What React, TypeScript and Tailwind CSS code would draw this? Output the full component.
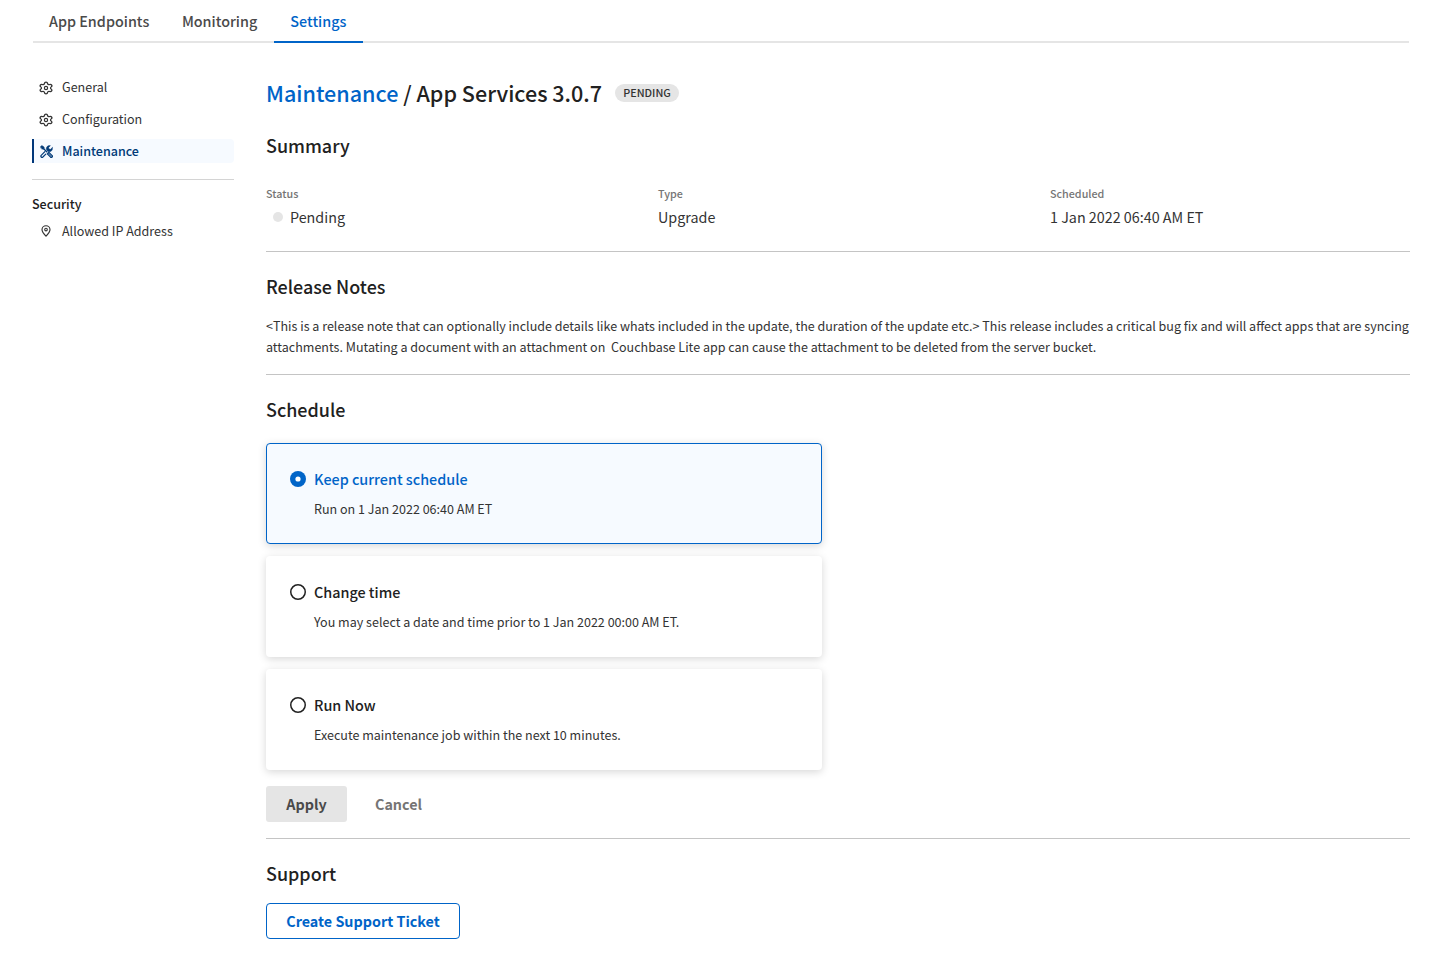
import type { ReactNode } from "react";

const tabs = [
  { label: "App Endpoints", active: false },
  { label: "Monitoring", active: false },
  { label: "Settings", active: true },
];

const options = [
  { title: "Keep current schedule", text: "Run on 1 Jan 2022 06:40 AM ET", selected: true },
  { title: "Change time", text: "You may select a date and time prior to 1 Jan 2022 00:00 AM ET.", selected: false },
  { title: "Run Now", text: "Execute maintenance job within the next 10 minutes.", selected: false },
];

const releaseNotes =
  "<This is a release note that can optionally include details like whats included in the update, the duration of the update etc.> This release includes a critical bug fix and will affect apps that are syncing\nattachments. Mutating a document with an attachment on  Couchbase Lite app can cause the attachment to be deleted from the server bucket.";

function GearIcon() {
  return (
    <svg className="mt-px size-[14px]" viewBox="0 0 24 24" fill="none" stroke="currentColor" strokeWidth="2" strokeLinejoin="round">
      <path d="M9.671 4.136a2.34 2.34 0 0 1 4.659 0 2.34 2.34 0 0 0 3.319 1.915 2.34 2.34 0 0 1 2.33 4.033 2.34 2.34 0 0 0 0 3.831 2.34 2.34 0 0 1-2.33 4.033 2.34 2.34 0 0 0-3.319 1.915 2.34 2.34 0 0 1-4.659 0 2.34 2.34 0 0 0-3.32-1.915 2.34 2.34 0 0 1-2.33-4.033 2.34 2.34 0 0 0 0-3.831A2.34 2.34 0 0 1 6.35 6.051a2.34 2.34 0 0 0 3.319-1.915" transform="translate(12 12) scale(1.12 1) translate(-12 -12)" />
      <circle cx="12" cy="12" r="2.8" />
    </svg>
  );
}

function ToolsIcon() {
  return (
    <svg className="mt-px size-[13px]" viewBox="0 0 24 24" fill="none" stroke="currentColor" strokeLinecap="round" strokeLinejoin="round">
      <path d="M1 3.2 3.2 1 7.6 3.8v2.6L6.4 7.6H3.8Z" fill="currentColor" strokeWidth="1" />
      <path d="m6.8 6.8 6 6" strokeWidth="2.4" />
      <path d="m13.6 16.4 2.8-2.8 6 6a2 2 0 0 1-2.8 2.8Z" strokeWidth="2.4" />
      <path d="m15.6 15.6 5 5" strokeWidth="1.2" />
      <path
        d="M22.8 4.8 19.6 8l-3-.6-.6-3 3.2-3.2a6 6 0 0 0-7.4 7.6l1.6 2 2 1.6a6 6 0 0 0 7.4-7.6Z"
        fill="currentColor"
        strokeWidth="0.8"
      />
      <path d="m9 12.2-6.8 6.9a2.2 2.2 0 0 0 3.1 3.1l5.4-5.4" strokeWidth="2.2" />
    </svg>
  );
}

function PinIcon() {
  return (
    <svg className="h-3 w-[10px]" viewBox="0 0 10 12" fill="none" stroke="currentColor">
      <path d="M5 11.2C3.9 10 1 6.9 1 4.7a4 4 0 0 1 8 0C9 6.9 6.1 10 5 11.2Z" strokeWidth="1.15" strokeLinejoin="round" />
      <circle cx="5" cy="4.6" r="1.3" strokeWidth="1.1" />
    </svg>
  );
}

function Radio({ selected }: { selected: boolean }) {
  return selected ? (
    <svg className="mt-1 size-4" viewBox="0 0 16 16">
      <circle cx="8" cy="8" r="8" fill="#0064c8" />
      <circle cx="8" cy="8" r="2.6" fill="#ffffff" />
    </svg>
  ) : (
    <svg className="mt-1 size-4" viewBox="0 0 16 16" fill="#ffffff" stroke="#212121" strokeWidth="1.5">
      <circle cx="8" cy="8" r="7.25" />
    </svg>
  );
}

function Tabs() {
  return (
    <nav className="ml-px flex h-[43px] w-[1376px] gap-[0.6px] border-b-2 border-[#e5e5e5] text-[14.36px] leading-[24px] font-medium">
      {tabs.map((t) => (
        <a
          key={t.label}
          className={
            t.active
              ? "h-[43px] w-[89px] border-b-2 border-[#0064c8] pt-[9px] text-center text-[#0064c8]"
              : "h-[43px] px-4 pt-[9px] text-[#4a4a4a]"
          }
        >
          {t.label}
        </a>
      ))}
    </nav>
  );
}

function Sidebar() {
  return (
    <aside className="w-[202px] pt-8 text-[12.54px] leading-[24px] text-[#333333]">
      <ul className="flex flex-col gap-2">
        <li className="flex h-6 items-center gap-[9px] pl-[7px]">
          <GearIcon />
          <span>General</span>
        </li>
        <li className="flex h-6 items-center gap-[9px] pl-[7px]">
          <GearIcon />
          <span>Configuration</span>
        </li>
        <li className="flex h-6 items-center gap-[9.5px] rounded-r border-l-2 border-[#00377a] bg-[#f6faff] pl-[5.5px] font-medium text-[#003a78]">
          <ToolsIcon />
          <span>Maintenance</span>
        </li>
      </ul>
      <hr className="mt-4 border-[#d4d4d4]" />
      <h2 className="mt-3 font-medium text-[#212121]">Security</h2>
      <div className="mt-[3px] flex h-6 items-center gap-[11px] pl-[9px]">
        <PinIcon />
        <span>Allowed IP Address</span>
      </div>
    </aside>
  );
}

function Field({ label, children }: { label: string; children: ReactNode }) {
  return (
    <div>
      <dt className="text-[10.75px] leading-[16px] font-medium text-[#757575]">{label}</dt>
      <dd className="mt-[3px] flex items-center text-[14.33px] leading-[24px] text-[#333333]">{children}</dd>
    </div>
  );
}

function Heading({ children }: { children: ReactNode }) {
  return <h2 className="text-[17.95px] leading-[28px] font-medium text-[#212121]">{children}</h2>;
}

function Option({ title, text, selected }: { title: string; text: string; selected: boolean }) {
  return (
    <label
      className={
        selected
          ? "flex h-[101px] gap-2 rounded border border-[#0064c8] bg-[#f6faff] pt-[23px] pl-[23px] shadow-[0_2px_8px_rgba(0,0,0,0.16)]"
          : "flex h-[101px] gap-2 rounded bg-white pt-6 pl-6 shadow-[0_2px_8px_rgba(0,0,0,0.16)]"
      }
    >
      <Radio selected={selected} />
      <span className="flex flex-col">
        <span
          className={
            selected
              ? "text-[14.36px] leading-[24px] font-medium text-[#0064c8]"
              : "text-[14.36px] leading-[24px] font-medium text-[#212121]"
          }
        >
          {title}
        </span>
        <span className="mt-[7px] text-[12.54px] leading-[21px] text-[#333333]">{text}</span>
      </span>
    </label>
  );
}

export default function App() {
  return (
    <div className="min-h-[971px] bg-white px-8 font-['Noto_Sans_CJK_SC',sans-serif]">
      <Tabs />
      <div className="flex gap-8">
        <Sidebar />
        <main className="w-[1144px] pt-[34px]">
          <div className="flex h-8 items-center">
            <h1 className="text-[21.55px] leading-[32px] font-medium text-[#212121]">
              <a className="text-[#0064c8]">Maintenance</a> / App Services 3.0.7
            </h1>
            <span className="ml-[13px] flex h-[18px] w-16 items-center justify-center rounded-full bg-[#e5e5e5] text-[10.75px] leading-[18px] font-medium text-[#333333]">
              PENDING
            </span>
          </div>
          <div className="mt-[22px]">
            <Heading>Summary</Heading>
          </div>
          <dl className="mt-[27px] grid grid-cols-3 gap-8">
            <Field label="Status">
              <span className="mr-[7px] ml-[7px] size-[10px] rounded-full bg-[#e5e5e5]" />
              Pending
            </Field>
            <Field label="Type">Upgrade</Field>
            <Field label="Scheduled">1 Jan 2022 06:40 AM ET</Field>
          </dl>
          <hr className="mt-[22px] border-[#c4c4c4]" />
          <div className="mt-5">
            <Heading>Release Notes</Heading>
          </div>
          <p className="mt-[15px] text-[12.54px] leading-[21px] whitespace-pre text-[#333333]">{releaseNotes}</p>
          <hr className="mt-[17px] border-[#c4c4c4]" />
          <div className="mt-5">
            <Heading>Schedule</Heading>
          </div>
          <div className="mt-5 flex w-[556px] flex-col gap-3">
            {options.map((o) => (
              <Option key={o.title} {...o} />
            ))}
          </div>
          <div className="mt-4 flex h-9 text-[14.33px] leading-[36px] font-bold">
            <button className="w-[81px] rounded-[3px] bg-[#e5e5e5] text-[#4a4a4a]">Apply</button>
            <button className="ml-7 text-[#757575]">Cancel</button>
          </div>
          <hr className="mt-4 border-[#c4c4c4]" />
          <div className="mt-5">
            <Heading>Support</Heading>
          </div>
          <button className="mt-4 h-9 w-[194px] rounded border border-[#0064c8] text-[14.33px] leading-[34px] font-bold text-[#0064c8]">
            Create Support Ticket
          </button>
        </main>
      </div>
    </div>
  );
}
